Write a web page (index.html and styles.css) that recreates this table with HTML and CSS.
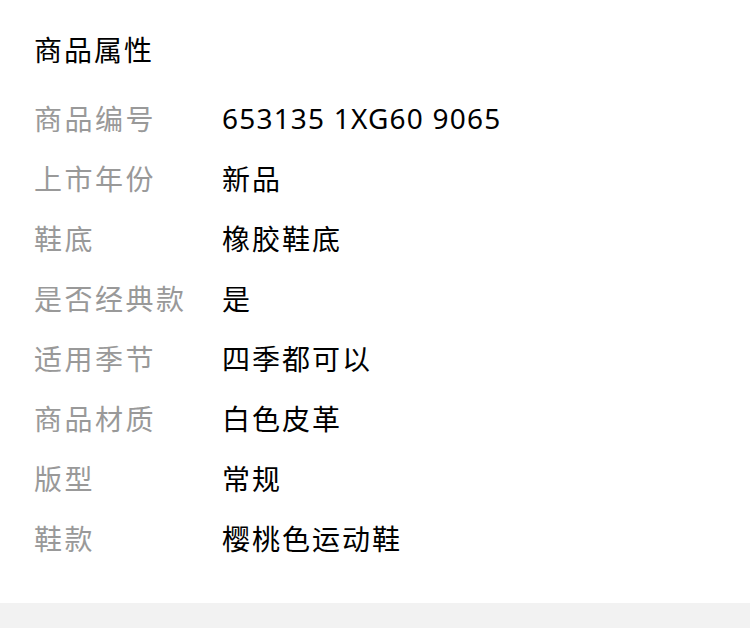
FILE: index.html
```html
<!DOCTYPE html>
<html lang="zh-CN">
<head>
    <meta charset="UTF-8">
    <meta name="viewport" content="width=device-width, initial-scale=1.0">
    <title>商品属性</title>
    <link rel="stylesheet" href="styles.css">
</head>
<body>
    <section class="attrs">
        <h2 class="attrs-title">商品属性</h2>
        <div class="attr-list">
            <div class="attr-row"><span class="attr-label">商品编号</span><span class="attr-value attr-code">653135 1XG60 9065</span></div>
            <div class="attr-row"><span class="attr-label">上市年份</span><span class="attr-value">新品</span></div>
            <div class="attr-row"><span class="attr-label">鞋底</span><span class="attr-value">橡胶鞋底</span></div>
            <div class="attr-row"><span class="attr-label">是否经典款</span><span class="attr-value">是</span></div>
            <div class="attr-row"><span class="attr-label">适用季节</span><span class="attr-value">四季都可以</span></div>
            <div class="attr-row"><span class="attr-label">商品材质</span><span class="attr-value">白色皮革</span></div>
            <div class="attr-row"><span class="attr-label">版型</span><span class="attr-value">常规</span></div>
            <div class="attr-row"><span class="attr-label">鞋款</span><span class="attr-value">樱桃色运动鞋</span></div>
        </div>
    </section>
    <div class="gap-band"></div>
</body>
</html>
```

FILE: styles.css
```css
:root {
    --text: #000000;
    --muted: #999999;
    --band: #f2f2f2;
}

* {
    margin: 0;
    padding: 0;
    box-sizing: border-box;
    font-family: 'Noto Sans', 'Noto Sans CJK SC', sans-serif;
}

body {
    background: #ffffff;
    color: var(--text);
}

/* 商品属性 */
.attrs {
    padding: 20px 34px 35px;
}

.attrs-title {
    font-size: 28px;
    font-weight: 400;
    line-height: 60px;
    letter-spacing: 2px;
    margin-bottom: 8px;
}

.attr-row {
    display: flex;
    height: 60px;
    align-items: center;
    font-size: 28px;
}

.attr-label {
    width: 188px;
    flex-shrink: 0;
    color: var(--muted);
    letter-spacing: 2.5px;
}

.attr-value {
    letter-spacing: 2px;
}

.attr-code {
    letter-spacing: 1.2px;
}

.gap-band {
    height: 25px;
    background: var(--band);
}
```
